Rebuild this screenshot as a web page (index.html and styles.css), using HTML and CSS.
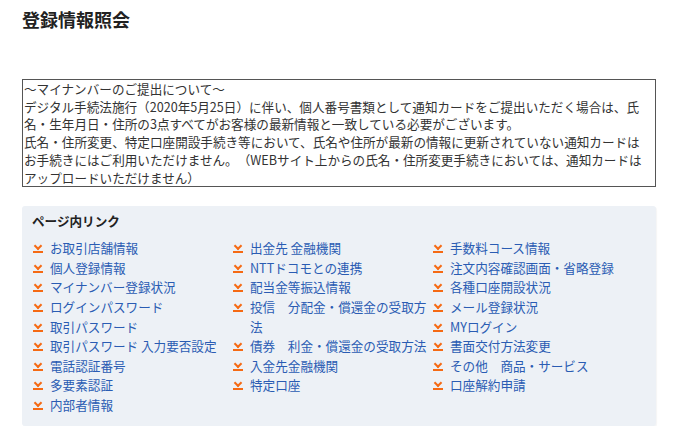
FILE: index.html
```html
<!DOCTYPE html>
<html lang="ja">
<head>
<meta charset="utf-8">
<link rel="stylesheet" href="styles.css">
</head>
<body>
<div class="page">
  <h1 class="title">登録情報照会</h1>
  <div class="notice">
    <p>～マイナンバーのご提出について～</p>
    <p>デジタル手続法施行（2020年5月25日）に伴い、個人番号書類として通知カードをご提出いただく場合は、氏名・生年月日・住所の3点すべてがお客様の最新情報と一致している必要がございます。</p>
    <p>氏名・住所変更、特定口座開設手続き等において、氏名や住所が最新の情報に更新されていない通知カードは<br>お手続きにはご利用いただけません。（WEBサイト上からの氏名・住所変更手続きにおいては、通知カードは<br>アップロードいただけません）</p>
  </div>
  <section class="links">
    <h2 class="links-title">ページ内リンク</h2>
    <div class="cols">
      <ul class="col">
        <li><span class="ic"></span><a>お取引店舗情報</a></li>
        <li><span class="ic"></span><a>個人登録情報</a></li>
        <li><span class="ic"></span><a>マイナンバー登録状況</a></li>
        <li><span class="ic"></span><a>ログインパスワード</a></li>
        <li><span class="ic"></span><a>取引パスワード</a></li>
        <li><span class="ic"></span><a>取引パスワード 入力要否設定</a></li>
        <li><span class="ic"></span><a>電話認証番号</a></li>
        <li><span class="ic"></span><a>多要素認証</a></li>
        <li><span class="ic"></span><a>内部者情報</a></li>
      </ul>
      <ul class="col">
        <li><span class="ic"></span><a>出金先 金融機関</a></li>
        <li><span class="ic"></span><a>NTTドコモとの連携</a></li>
        <li><span class="ic"></span><a>配当金等振込情報</a></li>
        <li><span class="ic"></span><a>投信　分配金・償還金の受取方法</a></li>
        <li><span class="ic"></span><a>債券　利金・償還金の受取方法</a></li>
        <li><span class="ic"></span><a>入金先金融機関</a></li>
        <li><span class="ic"></span><a>特定口座</a></li>
      </ul>
      <ul class="col">
        <li><span class="ic"></span><a>手数料コース情報</a></li>
        <li><span class="ic"></span><a>注文内容確認画面・省略登録</a></li>
        <li><span class="ic"></span><a>各種口座開設状況</a></li>
        <li><span class="ic"></span><a>メール登録状況</a></li>
        <li><span class="ic"></span><a>MYログイン</a></li>
        <li><span class="ic"></span><a>書面交付方法変更</a></li>
        <li><span class="ic"></span><a>その他　商品・サービス</a></li>
        <li><span class="ic"></span><a>口座解約申請</a></li>
      </ul>
    </div>
  </section>
</div>
</body>
</html>
```
FILE: styles.css
```css
* { box-sizing: border-box; }
html, body { margin: 0; padding: 0; background: #fff; }
body {
  font-family: "Noto Sans CJK JP", "Noto Sans", sans-serif;
  color: #333;
  text-spacing-trim: space-all;
}
.page {
  width: 634px;
  margin-left: 22px;
  padding-top: 7px;
}
.title {
  margin: 0;
  font-size: 18px;
  line-height: 24px;
  font-weight: bold;
  color: #222;
}
.notice {
  margin-top: 48px;
  border: 1px solid #555;
  padding: 0 1px;
  font-size: 12.6px;
  line-height: 17.7px;
  color: #333;
}
.notice p { margin: 0; }
.links {
  margin-top: 19px;
  background: #edf1f6;
  border-radius: 3px;
  padding: 5px 10px 11px 10px;
  box-shadow: 1px 1px 1px rgba(0,0,0,0.04);
}
.links-title {
  margin: 0;
  font-size: 12.6px;
  line-height: 20px;
  font-weight: bold;
  color: #222;
}
.cols {
  display: flex;
  margin-top: 7px;
}
.col {
  list-style: none;
  margin: 0;
  padding: 0;
  width: 200px;
}
.col li {
  display: flex;
  align-items: flex-start;
  gap: 7px;
  font-size: 12.6px;
  line-height: 19.6px;
}
.col li a {
  color: #2a5cb3;
  text-decoration: none;
}
.ic {
  flex: none;
  width: 10px;
  height: 10px;
  margin-top: 6px;
  margin-left: 1px;
  position: relative;
}
.ic::before {
  content: "";
  position: absolute;
  left: 2px;
  top: -1px;
  width: 4px;
  height: 4px;
  border-right: 2px solid #f56a14;
  border-bottom: 2px solid #f56a14;
  transform: rotate(45deg);
}
.ic::after {
  content: "";
  position: absolute;
  left: 0;
  top: 7px;
  width: 10px;
  height: 2px;
  background: #f56a14;
}
```
